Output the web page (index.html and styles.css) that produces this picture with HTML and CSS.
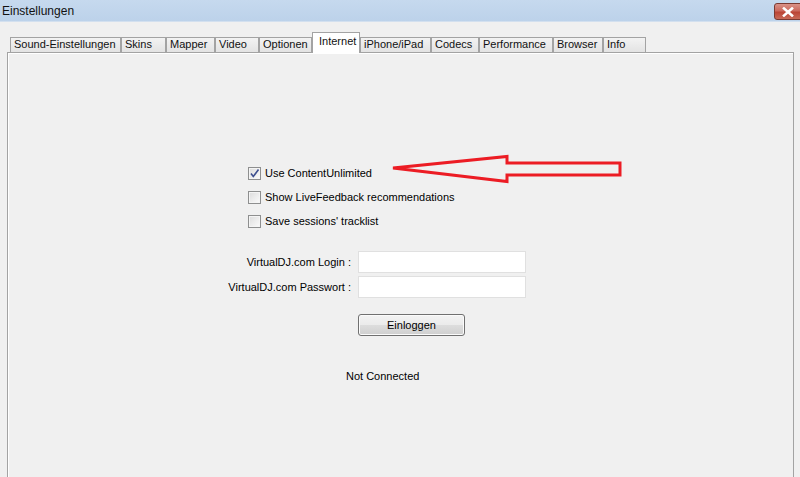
FILE: index.html
```html
<!DOCTYPE html>
<html lang="de">
<head>
<meta charset="utf-8">
<title>Einstellungen</title>
<link rel="stylesheet" href="styles.css">
</head>
<body>
<div class="window">
  <div class="titlebar">
    <span class="title">Einstellungen</span>
    <span class="close">
      <svg width="12" height="10" viewBox="0 0 12 10"><path d="M2 1.5 L10 8.5 M10 1.5 L2 8.5" stroke="#fff" stroke-width="2.6" stroke-linecap="square"/></svg>
    </span>
  </div>
  <div class="content">
    <div class="tabs">
      <div class="tab t-sound">Sound-Einstellungen</div>
      <div class="tab t-skins">Skins</div>
      <div class="tab t-mapper">Mapper</div>
      <div class="tab t-video">Video</div>
      <div class="tab t-optionen">Optionen</div>
      <div class="tab t-internet selected">Internet</div>
      <div class="tab t-iphone">iPhone/iPad</div>
      <div class="tab t-codecs">Codecs</div>
      <div class="tab t-perf">Performance</div>
      <div class="tab t-browser">Browser</div>
      <div class="tab t-info">Info</div>
    </div>
    <div class="panel">
      <div class="checks">
        <label class="check-row"><span class="box checked"><svg width="11" height="11" viewBox="0 0 11 11"><path d="M2 5.5 L4.3 8.5 L9.5 1.5" fill="none" stroke="#3d4f8f" stroke-width="1.6"/></svg></span><span>Use ContentUnlimited</span></label>
        <label class="check-row"><span class="box"></span><span>Show LiveFeedback recommendations</span></label>
        <label class="check-row"><span class="box"></span><span>Save sessions' tracklist</span></label>
      </div>
      <div class="form">
        <span class="lbl">VirtualDJ.com Login :</span>
        <span class="field"></span>
        <span class="lbl">VirtualDJ.com Passwort :</span>
        <span class="field"></span>
        <span></span>
        <span class="btn">Einloggen</span>
      </div>
      <div class="status">Not Connected</div>
    </div>
  </div>
  <svg class="arrow" width="800" height="477" viewBox="0 0 800 477">
    <polygon points="393,168 507,156.5 507,163 620,163 620,175 507,175 507,181.5" fill="none" stroke="#ec1c24" stroke-width="3" stroke-linejoin="miter"/>
  </svg>
</div>
</body>
</html>
```

FILE: styles.css
```css
* { box-sizing: border-box; }
html, body { margin: 0; padding: 0; }
body {
  width: 800px;
  height: 477px;
  overflow: hidden;
  background: #f0f0f0;
  font-family: "Liberation Sans", Arial, sans-serif;
  font-size: 11px;
  color: #000;
}
.window {
  position: relative;
  width: 800px;
  height: 477px;
  overflow: hidden;
  background: #f0f0f0;
}
.titlebar {
  height: 22px;
  display: flex;
  justify-content: space-between;
  align-items: flex-start;
  background: linear-gradient(#c6d9ee, #bcd2ea);
  border-bottom: 1px solid #d3e0ef;
}
.title {
  font-size: 12px;
  line-height: 22px;
  padding-left: 2px;
  color: #111;
}
.close {
  margin-top: 3px;
  width: 27px;
  height: 17px;
  margin-right: -1px;
  border: 1px solid #7a3a32;
  border-radius: 3px 0 0 3px;
  background: linear-gradient(#d99288 0%, #cb6a5e 45%, #bb4536 55%, #c86a58 100%);
  display: flex;
  align-items: center;
  justify-content: center;
}
.content {
  padding-left: 7px;
}
.tabs {
  height: 30px;
  display: flex;
  align-items: flex-end;
  padding-left: 3px;
  position: relative;
  z-index: 2;
}
.tab {
  height: 15px;
  border: 1px solid #a3a3a3;
  border-bottom: none;
  background: linear-gradient(#f3f3f3, #e3e3e3);
  padding-left: 3px;
  line-height: 12px;
  white-space: nowrap;
  color: #111;
}
.tab.selected {
  height: 21px;
  margin-bottom: -1px;
  background: #fff;
  padding-left: 6px;
  line-height: 17px;
}
.t-sound { width: 111px; }
.t-skins { width: 45px; }
.t-mapper { width: 49px; }
.t-video { width: 44px; }
.t-optionen { width: 53px; }
.t-internet { width: 48px; }
.t-iphone { width: 71px; }
.t-codecs { width: 48px; }
.t-perf { width: 74px; }
.t-browser { width: 50px; }
.t-info { width: 43px; }
.panel {
  width: 787px;
  height: 440px;
  border: 1px solid #a3a3a3;
  box-shadow: inset 1px 1px 0 #fff;
  background: #f0f0f0;
  padding-top: 108px;
}
.checks {
  margin-left: 240px;
  display: flex;
  flex-direction: column;
}
.check-row {
  height: 24px;
  display: flex;
  align-items: center;
  gap: 4px;
}
.box {
  width: 13px;
  height: 13px;
  border: 1px solid #8e8f8f;
  background: linear-gradient(135deg, #dcdcdc, #fbfbfb);
  box-shadow: inset 0 0 0 1px #f4f4f4;
  display: flex;
  align-items: center;
  justify-content: center;
}
.form {
  margin-top: 18px;
  margin-left: 212px;
  display: grid;
  grid-template-columns: 134px 168px;
  grid-template-rows: 22px 22px 35px;
  column-gap: 4px;
  row-gap: 3px;
  align-items: center;
}
.lbl {
  text-align: right;
  white-space: nowrap;
  padding-right: 3px;
}
.field {
  height: 22px;
  background: #fff;
  border: 1px solid #e0e0e0;
}
.btn {
  align-self: end;
  width: 107px;
  height: 22px;
  border: 1px solid #707070;
  border-radius: 3px;
  background: linear-gradient(#f3f3f3 0%, #ebebeb 50%, #dddddd 51%, #cfcfcf 100%);
  box-shadow: inset 0 0 0 1px #fbfbfb;
  display: flex;
  align-items: center;
  justify-content: center;
}
.status {
  margin-top: 34px;
  margin-left: 338px;
  line-height: 13px;
}
.arrow {
  position: absolute;
  left: 0;
  top: 0;
  pointer-events: none;
  z-index: 5;
}
```
